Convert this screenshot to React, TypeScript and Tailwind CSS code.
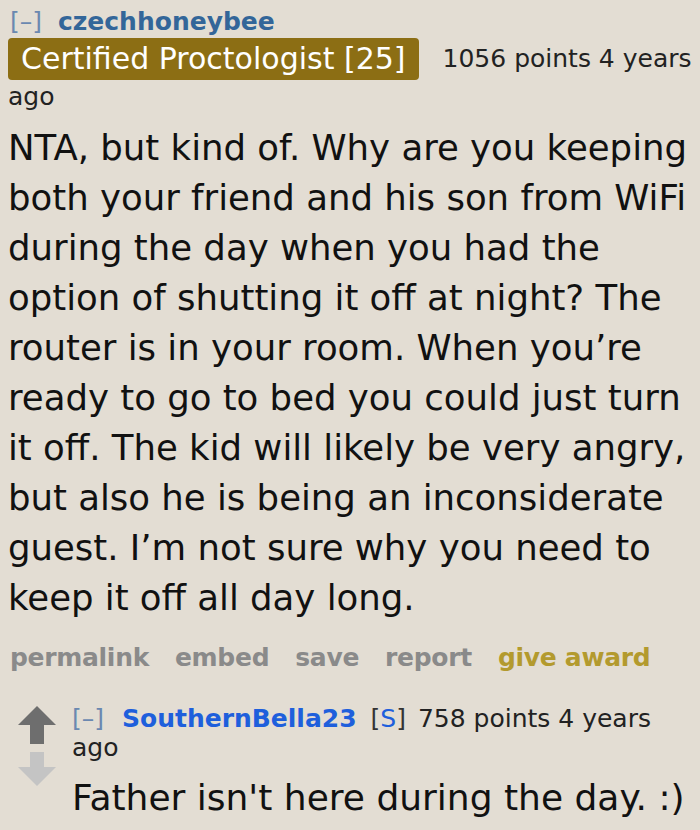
const bodyLines = [
  "NTA, but kind of. Why are you keeping",
  "both your friend and his son from WiFi",
  "during the day when you had the",
  "option of shutting it off at night? The",
  "router is in your room. When you’re",
  "ready to go to bed you could just turn",
  "it off. The kid will likely be very angry,",
  "but also he is being an inconsiderate",
  "guest. I’m not sure why you need to",
  "keep it off all day long.",
];

export default function App() {
  return (
    <div className="min-h-[830px] w-[700px] overflow-hidden bg-[#e3ddd3] pl-[8px] pt-[6px] font-['Verdana','DejaVu_Sans',sans-serif] text-[#222]">
      {/* tagline */}
      <div className="text-[25px] leading-[32px]">
        <span className="pl-[2px] text-[#6b88b0]">[–]</span>{" "}
        <span className="ml-[8px] font-bold text-[#336699]">czechhoneybee</span>
      </div>
      <div className="flex items-center">
        <span className="rounded-[4px] bg-[#8c6e14] px-[13px] text-[30px] leading-[42px] text-white">
          Certified Proctologist [25]
        </span>
        <span className="ml-[24px] text-[25px] leading-[32px] text-[#222]">1056 points 4 years</span>
      </div>
      <div className="text-[25px] leading-[34px]">ago</div>

      {/* body */}
      <div className="mt-[9px] text-[35.5px] leading-[50px] text-[#111]">
        {bodyLines.map((l) => (
          <div key={l} className="whitespace-nowrap">
            {l}
          </div>
        ))}
      </div>

      {/* buttons */}
      <div className="mt-[19px] flex gap-[26px] pl-[2px] text-[25px] font-bold leading-[32px] tracking-[-0.3px] text-[#8a8a8a]">
        <span>permalink</span>
        <span>embed</span>
        <span>save</span>
        <span>report</span>
        <span className="text-[#b39a2e]">give award</span>
      </div>

      {/* child comment */}
      <div className="mt-[29px] flex">
        <div className="flex w-[64px] flex-col items-start gap-[8px] pl-[10px] pt-[3px]">
          <svg width="38" height="38" viewBox="0 0 38 38">
            <path d="M19 0 L38 19 L26 19 L26 38 L12 38 L12 19 L0 19 Z" fill="#6e6e6e" />
          </svg>
          <svg width="38" height="34" viewBox="0 0 38 34">
            <path d="M12 0 L26 0 L26 15 L38 15 L19 34 L0 15 L12 15 Z" fill="#c4c4c4" />
          </svg>
        </div>
        <div>
          <div className="whitespace-nowrap text-[25px] leading-[31px]">
            <span className="text-[#6b88b0]">[–]</span>{" "}
            <span className="ml-[10px] font-bold text-[#1e5fdc]">SouthernBella23</span>{" "}
            <span className="ml-[6px] text-[#333]">
              [<span className="text-[#1e5fdc]">S</span>]
            </span>{" "}
            <span className="ml-[4px] text-[#222]">758 points 4 years</span>
          </div>
          <div className="text-[25px] leading-[28px]">ago</div>
          <div className="mt-[13px] whitespace-nowrap text-[36px] leading-[46px] text-[#111]">
            Father isn't here during the day. :)
          </div>
        </div>
      </div>
    </div>
  );
}
